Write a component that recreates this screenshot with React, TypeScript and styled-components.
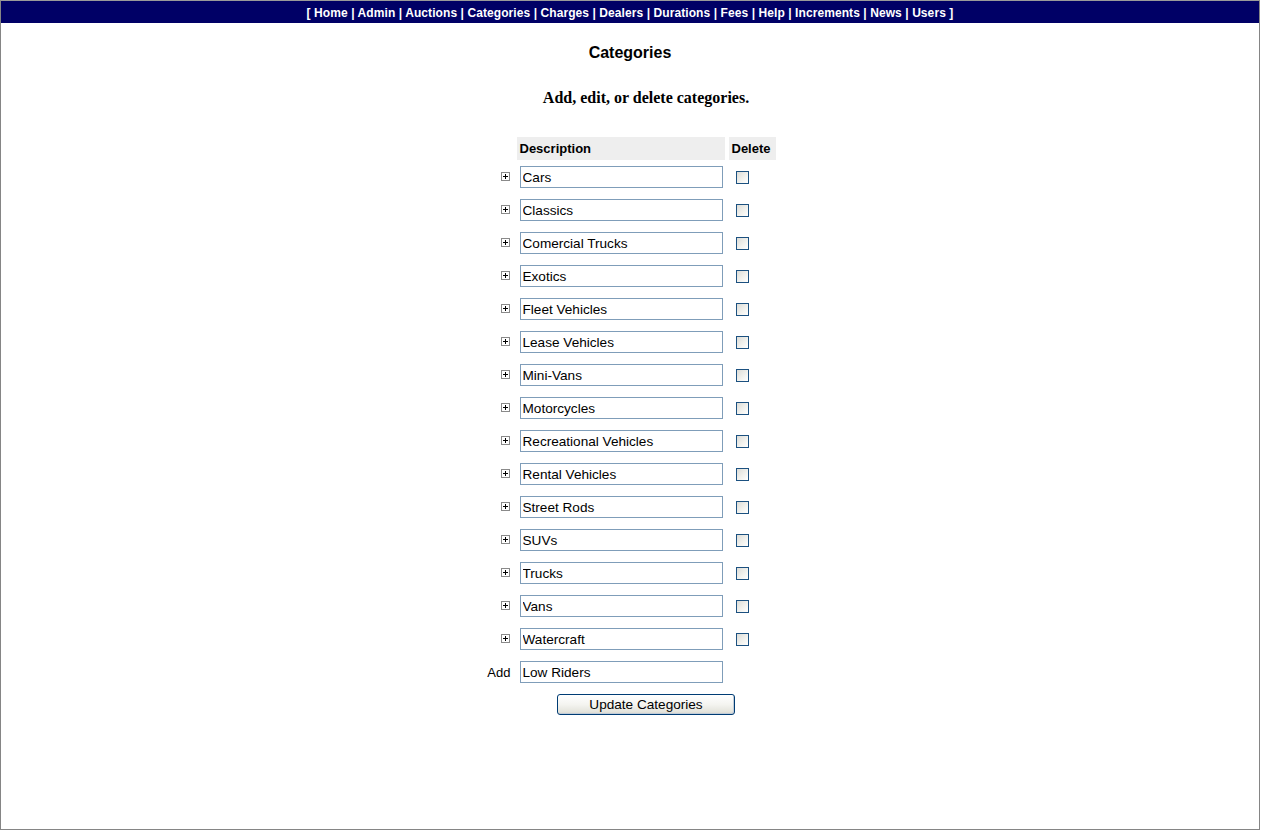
import React from "react"
import styled, { createGlobalStyle } from "styled-components"

const GlobalStyle = createGlobalStyle`
html, body {
  margin: 0;
  padding: 0;
  background: #ffffff;
}
`

const Frame = styled.div`
box-sizing: border-box;
width: 1260px;
height: 830px;
border: 1px solid #858585;
border-top-color: #9a9a9a;
display: flex;
flex-direction: column;
align-items: stretch;
font-family: "Liberation Sans", Arial, sans-serif;
color: #000;
`

const NavBar = styled.div`
box-sizing: border-box;
height: 22px;
padding-top: 2px;
background: #000066;
color: #ffffff;
font-weight: bold;
font-size: 12px;
letter-spacing: 0.08px;
line-height: 21px;
text-align: center;
white-space: pre;
`

const NavLink = styled.a`
color: #ffffff;
text-decoration: none;
`

const Title = styled.h1`
margin: 20px 0 0;
font-size: 16px;
line-height: 19px;
font-weight: bold;
text-align: center;
`

const Subtitle = styled.h2`
margin: 26px 0 0;
padding-left: 32px;
font-family: "Liberation Serif", "Times New Roman", serif;
font-size: 16px;
line-height: 19px;
font-weight: bold;
text-align: center;
`

const Table = styled.div`
align-self: center;
margin-top: 30px;
margin-left: 2px;
display: flex;
flex-direction: column;
`

const Row = styled.div<{ $gap: number }>`
display: grid;
grid-template-columns: 26px 208px 47px;
column-gap: 4px;
height: 22px;
margin-bottom: ${(p) => p.$gap}px;
`

const HeadCell = styled.div`
background: #eeeeee;
font-size: 13px;
font-weight: bold;
line-height: 23px;
padding-left: 3px;
`

const LeadCell = styled.div`
display: flex;
align-items: center;
justify-content: flex-end;
font-size: 13px;
padding-right: 2px;
`

const Expander = styled.svg`
margin-right: 1px;
margin-top: -1px;
`

const TextBox = styled.input`
box-sizing: border-box;
width: 203px;
height: 22px;
margin-left: 3px;
border: 1px solid #7f9db9;
padding: 0 2px;
font-family: "Liberation Sans", Arial, sans-serif;
font-size: 13.6px;
color: #000;
background: #fff;
outline: none;
`

const CheckCell = styled.div`
padding: 5px 0 0 7px;
`

const Check = styled.input`
appearance: none;
margin: 0;
width: 13px;
height: 13px;
box-sizing: border-box;
border: 1px solid #1c5180;
background: linear-gradient(135deg, #dcdcd7 0%, #f3f3ef 60%, #ffffff 100%);
display: block;
`

const ButtonRow = styled.div`
display: grid;
grid-template-columns: 26px 259px;
column-gap: 4px;
`

const UpdateButton = styled.button`
grid-column: 2;
justify-self: center;
width: 178px;
height: 21px;
border: 1px solid #003c74;
border-radius: 3px;
background: linear-gradient(#ffffff 0%, #f4f4f0 50%, #e3e3db 90%, #d6d0c5 100%);
font-family: "Liberation Sans", Arial, sans-serif;
font-size: 13.6px;
color: #000;
padding: 0;
box-shadow: inset -1px -1px 0 #c1ccd8;
`

const links = ["Home", "Admin", "Auctions", "Categories", "Charges", "Dealers", "Durations", "Fees", "Help", "Increments", "News", "Users"]

const categories = [
    "Cars",
    "Classics",
    "Comercial Trucks",
    "Exotics",
    "Fleet Vehicles",
    "Lease Vehicles",
    "Mini-Vans",
    "Motorcycles",
    "Recreational Vehicles",
    "Rental Vehicles",
    "Street Rods",
    "SUVs",
    "Trucks",
    "Vans",
    "Watercraft",
]

function PlusBox() {
    return (
        <Expander width="9" height="9" viewBox="0 0 9 9">
            <rect x="0.5" y="0.5" width="8" height="8" fill="#fff" stroke="#8a8a8a" />
            <path d="M2 4.5h5M4.5 2v5" stroke="#000" strokeWidth="1" />
        </Expander>
    )
}

export default function App() {
    return (
        <>
            <GlobalStyle />
            <Frame>
                <NavBar>
                    {"[ "}
                    {links.map((l, i) => (
                        <React.Fragment key={l}>
                            {i > 0 ? " | " : null}
                            <NavLink href="#">{l}</NavLink>
                        </React.Fragment>
                    ))}
                    {" ]"}
                </NavBar>
                <Title>Categories</Title>
                <Subtitle>Add, edit, or delete categories.</Subtitle>
                <Table>
                    <Row $gap={7}>
                        <div />
                        <HeadCell>Description</HeadCell>
                        <HeadCell>Delete</HeadCell>
                    </Row>
                    {categories.map((c) => (
                        <Row $gap={11} key={c}>
                            <LeadCell><PlusBox /></LeadCell>
                            <div><TextBox defaultValue={c} /></div>
                            <CheckCell><Check type="checkbox" /></CheckCell>
                        </Row>
                    ))}
                    <Row $gap={11}>
                        <LeadCell>Add</LeadCell>
                        <div><TextBox defaultValue="Low Riders" /></div>
                        <div />
                    </Row>
                    <ButtonRow>
                        <UpdateButton>Update Categories</UpdateButton>
                    </ButtonRow>
                </Table>
            </Frame>
        </>
    )
}
